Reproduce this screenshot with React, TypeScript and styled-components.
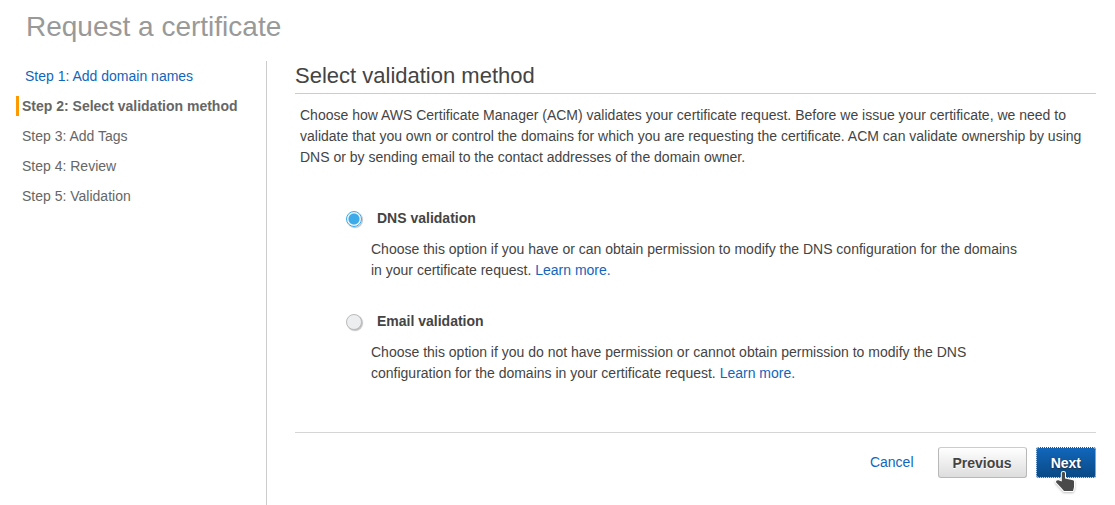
import React, { useState } from "react";
import styled, { createGlobalStyle } from "styled-components";

const GlobalStyle = createGlobalStyle`
  *, *::before, *::after { box-sizing: border-box; }
  body {
    margin: 0;
    background: #fff;
    color: #444;
    font: 14px/21px "Liberation Sans", Arial, sans-serif;
  }
`;

const Page = styled.div`
  display: flex;
  flex-direction: column;
  min-height: 100vh;
`;

const Title = styled.h1`
  margin: 0;
  padding: 11px 26px 18px;
  color: #999;
  font-size: 28px;
  font-weight: 400;
  line-height: 32px;
`;

const Columns = styled.div`
  display: flex;
  flex: 1;
`;

const Sidebar = styled.nav`
  flex: 0 0 267px;
  padding: 5px 0 0 16px;
  border-right: 1px solid #ccc;
`;

const StepList = styled.ol`
  display: flex;
  flex-direction: column;
  gap: 10px;
  margin: 0;
  padding: 0;
  list-style: none;
`;

const Step = styled.li<{ $current?: boolean }>`
  padding-left: 3px;
  border-left: 3px solid ${(p) => (p.$current ? "#f90" : "transparent")};
  color: #666;
  font-weight: ${(p) => (p.$current ? 700 : 400)};
  line-height: 20px;
`;

const Link = styled.a`
  color: #1166bb;
  text-decoration: none;
  &:hover { text-decoration: underline; }
`;

const StepLink = styled(Link)`
  padding-left: 3px;
`;

const Main = styled.main`
  flex: 1;
  min-width: 0;
  padding: 0 19px 24px 28px;
`;

const Heading = styled.h2`
  margin: 0;
  padding: 2px 0 5px;
  border-bottom: 1px solid #ccc;
  font-size: 22px;
  font-weight: 400;
  line-height: 25px;
`;

const Intro = styled.p`
  margin: 0;
  padding: 11px 5px 0;
`;

const Options = styled.fieldset`
  display: flex;
  flex-direction: column;
  gap: 30px;
  margin: 0;
  padding: 40px 76px 48px 51px;
  border: 0;
`;

const Option = styled.div`
  display: grid;
  grid-template-columns: 16px 1fr;
  column-gap: 9px;
  row-gap: 10px;
`;

const Radio = styled.input`
  appearance: none;
  width: 16px;
  height: 16px;
  margin: 3px 0 0;
  border: 1px solid #bbb;
  border-radius: 50%;
  background: #eceef0;
  box-shadow: 1px 1px 1px rgba(0, 0, 0, 0.25);
  &:checked {
    border-color: #3daae9;
    background: radial-gradient(circle, #3daae9 5px, #eef3f6 6px);
  }
`;

const OptionLabel = styled.label`
  padding-left: 6px;
  font-weight: 700;
`;

const OptionText = styled.p`
  grid-column: 2;
  max-width: 650px;
  margin: 0;
`;

const Actions = styled.footer`
  display: flex;
  align-items: center;
  justify-content: flex-end;
  padding-top: 14px;
  border-top: 1px solid #d5d5d5;
`;

const Button = styled.button<{ $primary?: boolean }>`
  position: relative;
  height: 31px;
  margin-left: ${(p) => (p.$primary ? "9px" : "24px")};
  padding: 2px 14px 0;
  border: 1px solid ${(p) => (p.$primary ? "#0a4c8c" : "#b8b8b8")};
  border-top-color: ${(p) => (p.$primary ? "#0a5aa8" : "#ccc")};
  border-radius: 3px;
  outline: ${(p) => (p.$primary ? "1px dotted #fff" : "none")};
  outline-offset: -1px;
  background: ${(p) =>
    p.$primary
      ? "linear-gradient(#1166bb, #0a4a86)"
      : "linear-gradient(#fff, #ddd)"};
  color: ${(p) => (p.$primary ? "#fff" : "#444")};
  text-shadow: ${(p) => (p.$primary ? "0 1px 2px #222" : "0 1px 0 #fff")};
  font: inherit;
  font-weight: 700;
`;

const Pointer = styled.svg`
  position: absolute;
  top: 22px;
  left: 17px;
  overflow: visible;
  pointer-events: none;
  filter: drop-shadow(0 1px 1px rgba(0, 0, 0, 0.25));
`;

const steps = [
  "Step 1: Add domain names",
  "Step 2: Select validation method",
  "Step 3: Add Tags",
  "Step 4: Review",
  "Step 5: Validation",
];

const options = [
  {
    id: "dns",
    label: "DNS validation",
    text: "Choose this option if you have or can obtain permission to modify the DNS configuration for the domains in your certificate request.",
  },
  {
    id: "email",
    label: "Email validation",
    text: "Choose this option if you do not have permission or cannot obtain permission to modify the DNS configuration for the domains in your certificate request.",
  },
];

export default function App() {
  const [method, setMethod] = useState("dns");

  return (
    <Page>
      <GlobalStyle />
      <Title>Request a certificate</Title>
      <Columns>
        <Sidebar>
          <StepList>
            {steps.map((step, i) => (
              <Step key={step} $current={i === 1}>
                {i === 0 ? <StepLink href="#domains">{step}</StepLink> : step}
              </Step>
            ))}
          </StepList>
        </Sidebar>
        <Main>
          <Heading>Select validation method</Heading>
          <Intro>
            Choose how AWS Certificate Manager (ACM) validates your certificate
            request. Before we issue your certificate, we need to validate that
            you own or control the domains for which you are requesting the
            certificate. ACM can validate ownership by using DNS or by sending
            email to the contact addresses of the domain owner.
          </Intro>
          <Options aria-label="Validation method">
            {options.map((o) => (
              <Option key={o.id}>
                <Radio
                  type="radio"
                  name="method"
                  id={o.id}
                  checked={method === o.id}
                  onChange={() => setMethod(o.id)}
                />
                <OptionLabel htmlFor={o.id}>{o.label}</OptionLabel>
                <OptionText>
                  {o.text} <Link href={"#learn-" + o.id}>Learn more.</Link>
                </OptionText>
              </Option>
            ))}
          </Options>
          <Actions>
            <Link href="#cancel">Cancel</Link>
            <Button type="button">Previous</Button>
            <Button type="button" $primary>
              Next
              <Pointer width="22" height="24" viewBox="0 0 22 24" aria-hidden="true">
                <path
                  d="M7.8 3.2C7.8 1.6 11 1.6 11 3.2V8.5L19 10.2Q20 10.6 20 11.6V17L19 21H10L7 17.5L2.2 12.4C1.6 10.6 3.2 10 5 10.4L7.8 11.6Z"
                  fill="#4a4a4a"
                  stroke="#fff"
                  strokeWidth="2"
                  strokeLinejoin="round"
                  paintOrder="stroke"
                />
              </Pointer>
            </Button>
          </Actions>
        </Main>
      </Columns>
    </Page>
  );
}
